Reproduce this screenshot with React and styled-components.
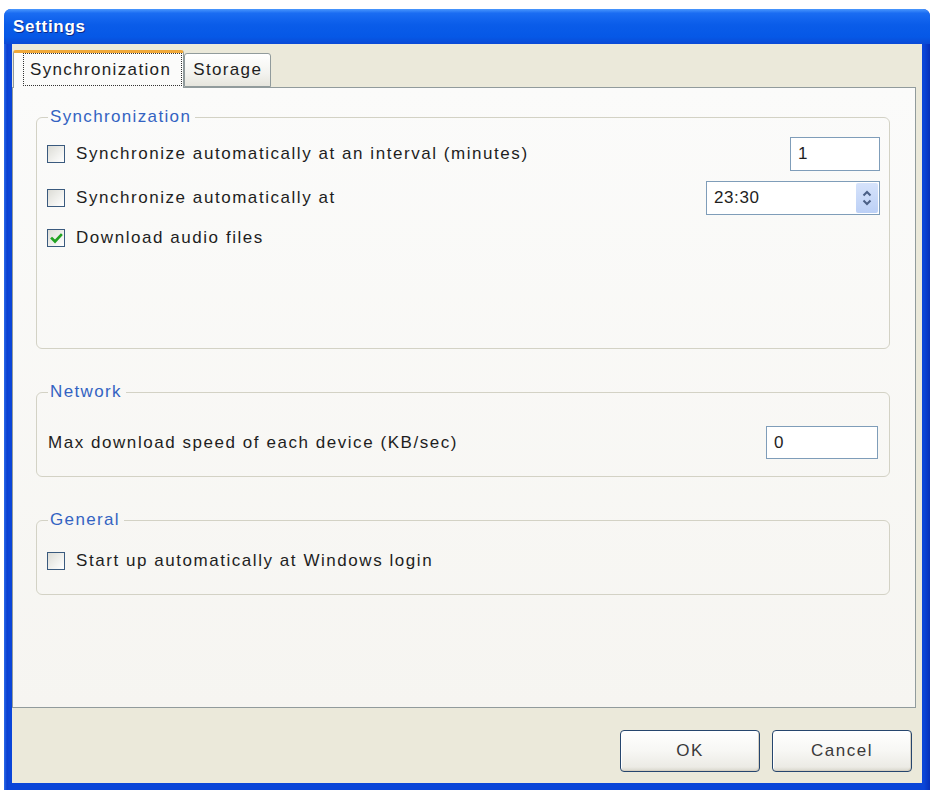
import React from "react";
import styled, { createGlobalStyle } from "styled-components";

const GlobalStyle = createGlobalStyle`
  html, body { margin: 0; padding: 0; background: #ffffff; }
  body { font-family: "Liberation Sans", Arial, sans-serif; }
  * { box-sizing: border-box; }
`;

const Window = styled.div`
  margin: 9px 0 0 4px;
  width: 926px;
  height: 781px;
  display: flex;
  flex-direction: column;
  background: linear-gradient(to right, #2a6bea 0px, #0a3fd0 3px, #0a45d8 5px, #0a45d8 calc(100% - 6px), #0630b8 100%);
  border-radius: 7px 7px 0 0;
  overflow: hidden;
`;

const TitleBar = styled.div`
  height: 35px;
  flex: none;
  display: flex;
  align-items: center;
  padding: 0 0 0 9px;
  background: linear-gradient(to bottom, #4a97fd 0%, #1a6cf2 12%, #0a5ce9 45%, #0658e6 80%, #0a4ad6 100%);
  color: #ffffff;
  font-weight: bold;
  font-size: 17px;
  letter-spacing: 0.7px;
  text-shadow: 1px 1px 0 #0a2a8a;
`;

const Body = styled.div`
  flex: 1;
  margin: 0 8px 7px 8px;
  background: #ebe9da;
  display: flex;
  flex-direction: column;
  padding: 6px 6px 0 0;
  font-size: 17px;
  letter-spacing: 1.55px;
  color: #1e1e1e;
`;

const TabStrip = styled.div`
  height: 37px;
  display: flex;
  align-items: flex-end;
  padding-left: 1px;
  position: relative;
  z-index: 1;
`;

const Tab = styled.div`
  height: ${(p) => (p.$active ? "38px" : "34px")};
  margin-bottom: ${(p) => (p.$active ? "-1px" : "0")};
  padding: ${(p) => (p.$active ? "0 1px 2px 9px" : "0 8px")};
  display: flex;
  align-items: center;
  border: 1px solid #919b9c;
  border-bottom: ${(p) => (p.$active ? "none" : "1px solid #919b9c")};
  border-top: ${(p) => (p.$active ? "3px solid #f0a838" : "1px solid #919b9c")};
  border-radius: 3px 3px 0 0;
  background: ${(p) =>
    p.$active
      ? "#fbfbfa"
      : "linear-gradient(to bottom, #ffffff 0%, #f3f3ef 60%, #e6e5dd 100%)"};
  color: #1e1e1e;
  letter-spacing: 1.35px;
`;

const FocusLabel = styled.span`
  display: flex;
  align-items: center;
  height: 100%;
  padding: 0 10px 0 6px;
  border: 1px dotted #333333;
`;

const Pane = styled.div`
  height: 621px;
  border: 1px solid #919b9c;
  background: linear-gradient(to bottom, #fbfbfa 0%, #f6f5f1 100%);
  padding: 19px 25px 0 23px;
  display: flex;
  flex-direction: column;
  gap: 33px;
`;

const Group = styled.fieldset`
  margin: 0;
  border: 1px solid #d3d2c5;
  border-radius: 6px;
  padding: ${(p) => p.$pad};
  display: flex;
  flex-direction: column;
  min-width: 0;
`;

const Legend = styled.legend`
  margin-left: 2px;
  padding: 0 4px 0 2px;
  line-height: 20px;
  color: #3363c2;
  letter-spacing: 1.35px;
`;

const Row = styled.div`
  display: flex;
  align-items: center;
  height: ${(p) => p.$h || "34px"};
  margin-top: ${(p) => p.$mt || "0"};
  padding-left: ${(p) => p.$pl || "0"};
`;

const Label = styled.span`
  flex: 1;
  white-space: nowrap;
`;

const Box = styled.span`
  width: 18px;
  height: 18px;
  flex: none;
  margin: 0 11px 0 1px;
  border: 1px solid #3a5a7e;
  background: linear-gradient(135deg, #dcdcd6 0%, #f2f2ef 60%, #ffffff 100%);
  display: flex;
  align-items: center;
  justify-content: center;
`;

const Field = styled.div`
  width: ${(p) => p.$w};
  height: ${(p) => p.$h || "34px"};
  border: 1px solid #7f9db9;
  background: #ffffff;
  display: flex;
  align-items: center;
  justify-content: space-between;
  padding: 0 1px 0 7px;
  letter-spacing: 0.6px;
`;

const Spin = styled.div`
  width: 22px;
  height: 30px;
  border-radius: 2px;
  background: linear-gradient(to bottom, #d6e3fb 0%, #bcd0f6 100%);
  display: flex;
  align-items: center;
  justify-content: center;
`;

const Footer = styled.div`
  flex: 1;
  display: flex;
  justify-content: flex-end;
  align-items: flex-start;
  gap: 12px;
  padding: 22px 4px 0 0;
`;

const Button = styled.button`
  width: 140px;
  height: 42px;
  border: 1px solid #26466e;
  border-radius: 4px;
  background: linear-gradient(to bottom, #ffffff 0%, #f7f7f4 50%, #ecebe5 90%, #d8d6cc 100%);
  box-shadow: inset -1px -1px 0 #d6d0c2, inset 1px 1px 0 #ffffff;
  font-family: "Liberation Sans", Arial, sans-serif;
  font-size: 17px;
  letter-spacing: 1.5px;
  color: #3a3a3a;
  padding: 0;
`;

const Check = ({ checked }) => (
  <Box>
    {checked && (
      <svg width="13" height="13" viewBox="0 0 13 13">
        <path d="M2 6.5 L5 9.5 L11 3" fill="none" stroke="#22a322" strokeWidth="2.6" strokeLinecap="square" />
      </svg>
    )}
  </Box>
);

const SpinArrows = () => (
  <svg width="12" height="20" viewBox="0 0 12 20">
    <path d="M2.5 7.5 L6 4 L9.5 7.5" fill="none" stroke="#4a5f86" strokeWidth="2" />
    <path d="M2.5 12.5 L6 16 L9.5 12.5" fill="none" stroke="#4a5f86" strokeWidth="2" />
  </svg>
);

export default function App() {
  return (
    <>
      <GlobalStyle />
      <Window>
        <TitleBar>Settings</TitleBar>
        <Body>
          <TabStrip>
            <Tab $active>
              <FocusLabel>Synchronization</FocusLabel>
            </Tab>
            <Tab>Storage</Tab>
          </TabStrip>
          <Pane>
            <Group $pad="10px 9px 100px 9px">
              <Legend>Synchronization</Legend>
              <Row>
                <Check />
                <Label>Synchronize automatically at an interval (minutes)</Label>
                <Field $w="90px">1</Field>
              </Row>
              <Row $mt="10px">
                <Check />
                <Label>Synchronize automatically at</Label>
                <Field $w="174px">
                  23:30
                  <Spin>
                    <SpinArrows />
                  </Spin>
                </Field>
              </Row>
              <Row $h="20px" $mt="13px">
                <Check checked />
                <Label>Download audio files</Label>
              </Row>
            </Group>
            <Group $pad="24px 11px 17px 9px">
              <Legend>Network</Legend>
              <Row $h="33px" $pl="2px">
                <Label>Max download speed of each device (KB/sec)</Label>
                <Field $w="112px" $h="33px">0</Field>
              </Row>
            </Group>
            <Group $pad="21px 9px 23px 9px">
              <Legend>General</Legend>
              <Row $h="20px">
                <Check />
                <Label>Start up automatically at Windows login</Label>
              </Row>
            </Group>
          </Pane>
          <Footer>
            <Button>OK</Button>
            <Button>Cancel</Button>
          </Footer>
        </Body>
      </Window>
    </>
  );
}
